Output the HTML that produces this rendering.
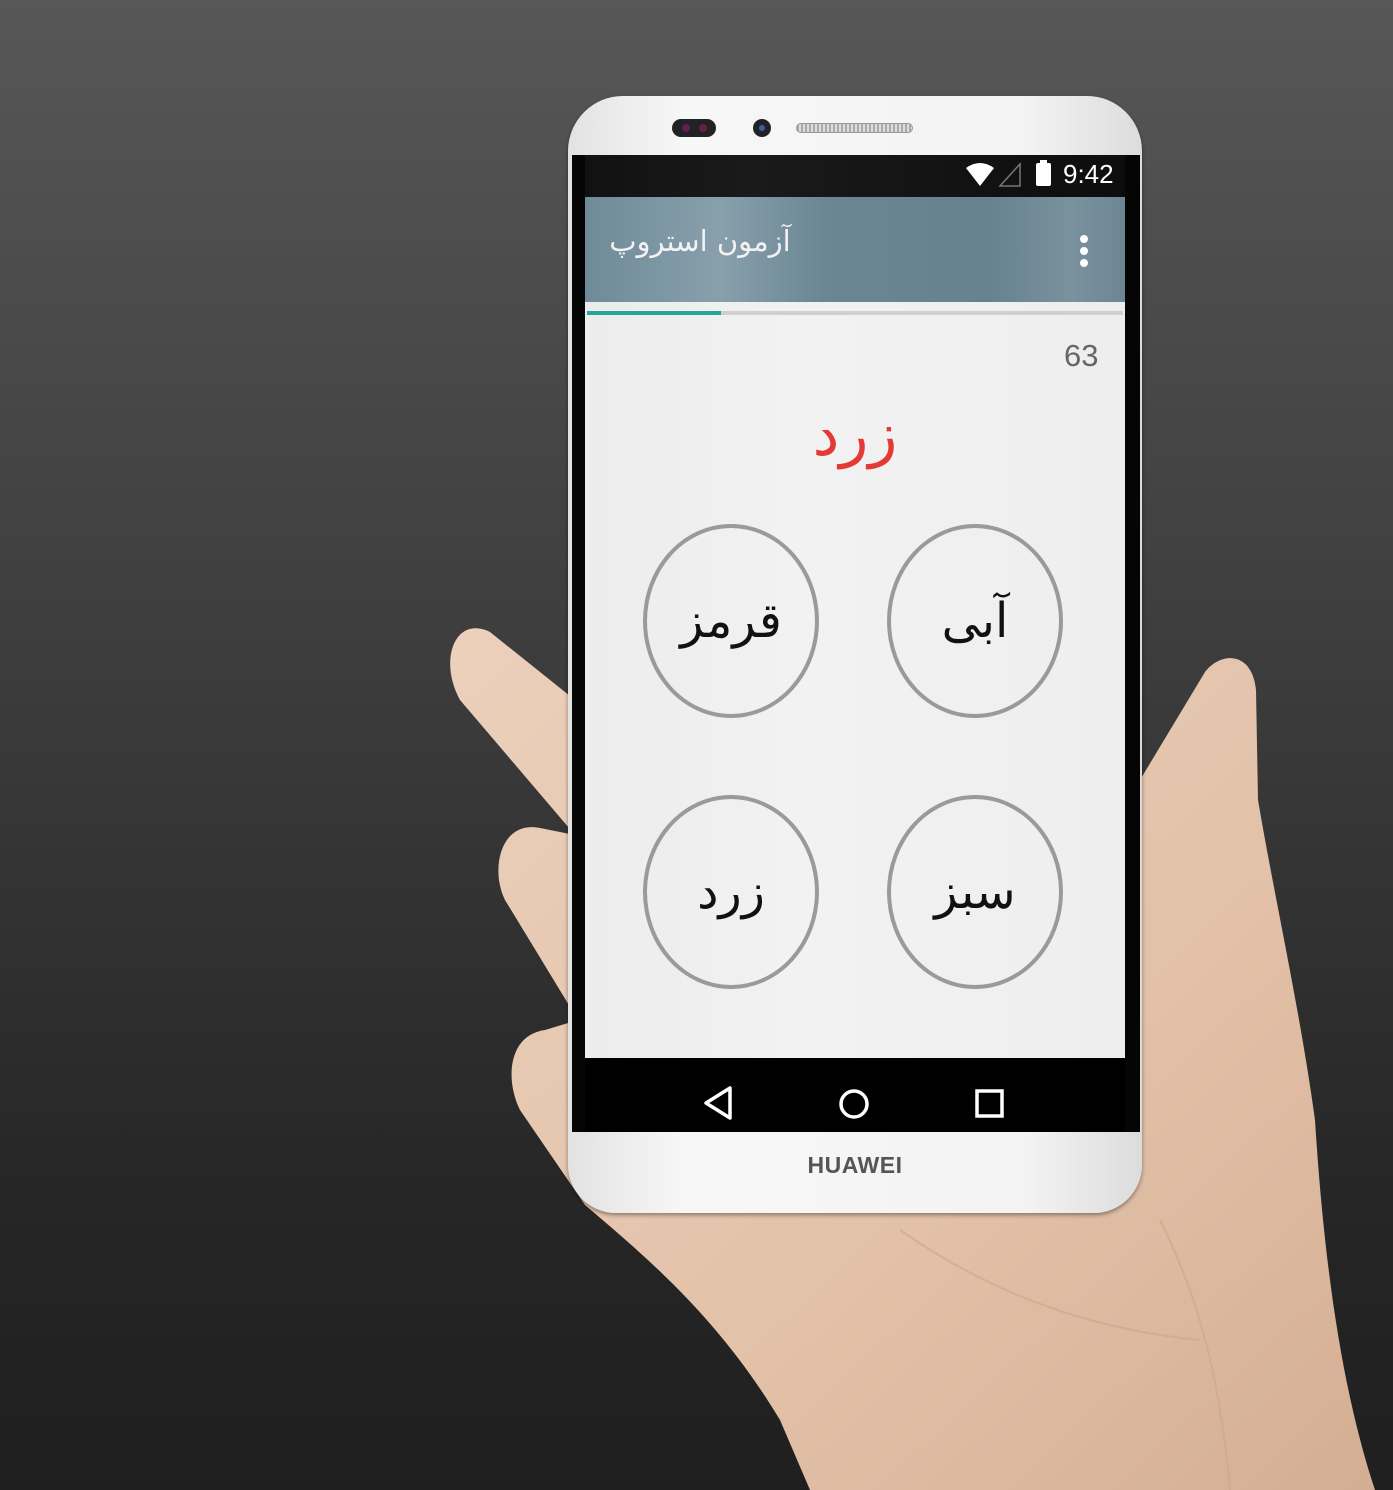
<!DOCTYPE html>
<html><head><meta charset="utf-8"><style>
html,body{margin:0;padding:0}
body{width:1393px;height:1490px;position:relative;overflow:hidden;background:linear-gradient(180deg,#575757 0%,#3c3c3c 45%,#262626 80%,#1f1f1f 100%);font-family:"Liberation Sans","DejaVu Sans",sans-serif}
.abs{position:absolute}
.ar{font-family:"DejaVu Sans","Liberation Sans",sans-serif;direction:rtl;white-space:nowrap}
.circ{position:absolute;width:176px;height:194px;border:4px solid #9a9a9a;border-radius:50%;box-sizing:border-box;display:flex;align-items:center;justify-content:center;font-size:48px;color:#111}
</style></head><body>
<svg class="abs" style="left:0;top:0" width="1393" height="1490">
<defs>
<linearGradient id="sk" x1="0" y1="0" x2="1" y2="1"><stop offset="0" stop-color="#ecd0bb"/><stop offset="0.6" stop-color="#e2c1a8"/><stop offset="1" stop-color="#d4ae93"/></linearGradient>
</defs>
<path fill="url(#sk)" d="M575 700 L490 632 C455 615 438 660 460 700 L575 835 L540 828 C500 820 490 870 505 900 L578 1020 L545 1030 C508 1035 505 1080 520 1110 L585 1205 C650 1260 720 1320 780 1420 L810 1490 L1375 1490 C1345 1400 1325 1280 1315 1120 C1300 1010 1275 900 1258 800 L1256 690 C1252 650 1220 652 1205 672 L1140 780 Z"/>
<path fill="none" stroke="#c8a68e" stroke-width="2" opacity="0.6" d="M1160 1220 C1200 1300 1220 1380 1230 1490 M900 1230 C1000 1300 1100 1330 1200 1340"/>
</svg>
<div class="abs" style="left:568px;top:96px;width:574px;height:1117px;border-radius:55px 55px 48px 48px;background:linear-gradient(90deg,#e2e2e2,#f7f7f7 20%,#f3f3f3 80%,#dcdcdc);box-shadow:0 2px 4px rgba(0,0,0,.4)"></div>
<div class="abs" style="left:672px;top:119px;width:44px;height:18px;border-radius:9px;background:#222"></div>
<div class="abs" style="left:682px;top:124px;width:8px;height:8px;border-radius:50%;background:#602050"></div>
<div class="abs" style="left:699px;top:124px;width:8px;height:8px;border-radius:50%;background:#602050"></div>
<div class="abs" style="left:753px;top:119px;width:18px;height:18px;border-radius:50%;background:#222"></div>
<div class="abs" style="left:759px;top:125px;width:6px;height:6px;border-radius:50%;background:#3a5ab0"></div>
<div class="abs" style="left:796px;top:123px;width:117px;height:10px;border-radius:5px;background:repeating-linear-gradient(90deg,#aaa 0 2px,#ddd 2px 4px);border:1px solid #999;box-sizing:border-box"></div>
<div class="abs" style="left:572px;top:155px;width:568px;height:977px;background:#050505"></div>
<div class="abs" style="left:585px;top:155px;width:540px;height:42px;background:linear-gradient(90deg,#111,#1a1a1a 30%,#0d0d0d)"></div>
<svg class="abs" style="left:960px;top:158px" width="70" height="32">
<path d="M6 10 Q20 0 34 10 L20 28 Z" fill="#fff"/>
<path d="M60 6 L60 28 L40 28 Z" fill="none" stroke="#777" stroke-width="1.5"/>
</svg>
<div class="abs" style="left:1036px;top:163px;width:15px;height:23px;background:#fff;border-radius:2px"></div>
<div class="abs" style="left:1040px;top:160px;width:7px;height:4px;background:#fff"></div>
<div class="abs" style="left:1063px;top:159px;color:#fff;font-size:26px">9:42</div>
<div class="abs" style="left:585px;top:197px;width:540px;height:105px;background:linear-gradient(90deg,#6f8a98 0%,#88a0ac 25%,#6b8593 45%,#67818f 75%,#7a929e 90%,#6d8694 100%)"></div>
<div class="abs ar" style="left:600px;top:224px;width:200px;color:#f2f2f2;font-size:29px;text-align:center">آزمون استروپ</div>
<div class="abs" style="left:1080px;top:235px;width:8px;height:8px;border-radius:50%;background:#fff;box-shadow:0 12px 0 #fff,0 24px 0 #fff"></div>
<div class="abs" style="left:585px;top:302px;width:540px;height:756px;background:linear-gradient(90deg,#ececec,#f2f2f2 40%,#eeeeee)"></div>
<div class="abs" style="left:587px;top:311px;width:536px;height:4px;background:#d0d0d0"></div>
<div class="abs" style="left:587px;top:311px;width:134px;height:4px;background:#26a69a"></div>
<div class="abs" style="left:1064px;top:338px;color:#666;font-size:31px">63</div>
<div class="abs ar" style="left:755px;top:400px;width:200px;text-align:center;color:#e53935;font-size:60px">زرد</div>
<div class="circ ar" style="left:643px;top:524px">قرمز</div>
<div class="circ ar" style="left:887px;top:524px">آبی</div>
<div class="circ ar" style="left:643px;top:795px">زرد</div>
<div class="circ ar" style="left:887px;top:795px">سبز</div>
<div class="abs" style="left:585px;top:1058px;width:540px;height:74px;background:#000"></div>
<svg class="abs" style="left:690px;top:1080px" width="330" height="50">
<path d="M40 8 L40 38 L16 23 Z" fill="none" stroke="#fff" stroke-width="3.5" stroke-linejoin="round"/>
<circle cx="164" cy="24" r="13" fill="none" stroke="#fff" stroke-width="3.5"/>
<rect x="287" y="11" width="25" height="25" fill="none" stroke="#fff" stroke-width="3.5"/>
</svg>
<div class="abs" style="left:755px;top:1152px;width:200px;text-align:center;color:#555;font-size:23px;font-weight:bold;letter-spacing:0.5px">HUAWEI</div>
</body></html>
